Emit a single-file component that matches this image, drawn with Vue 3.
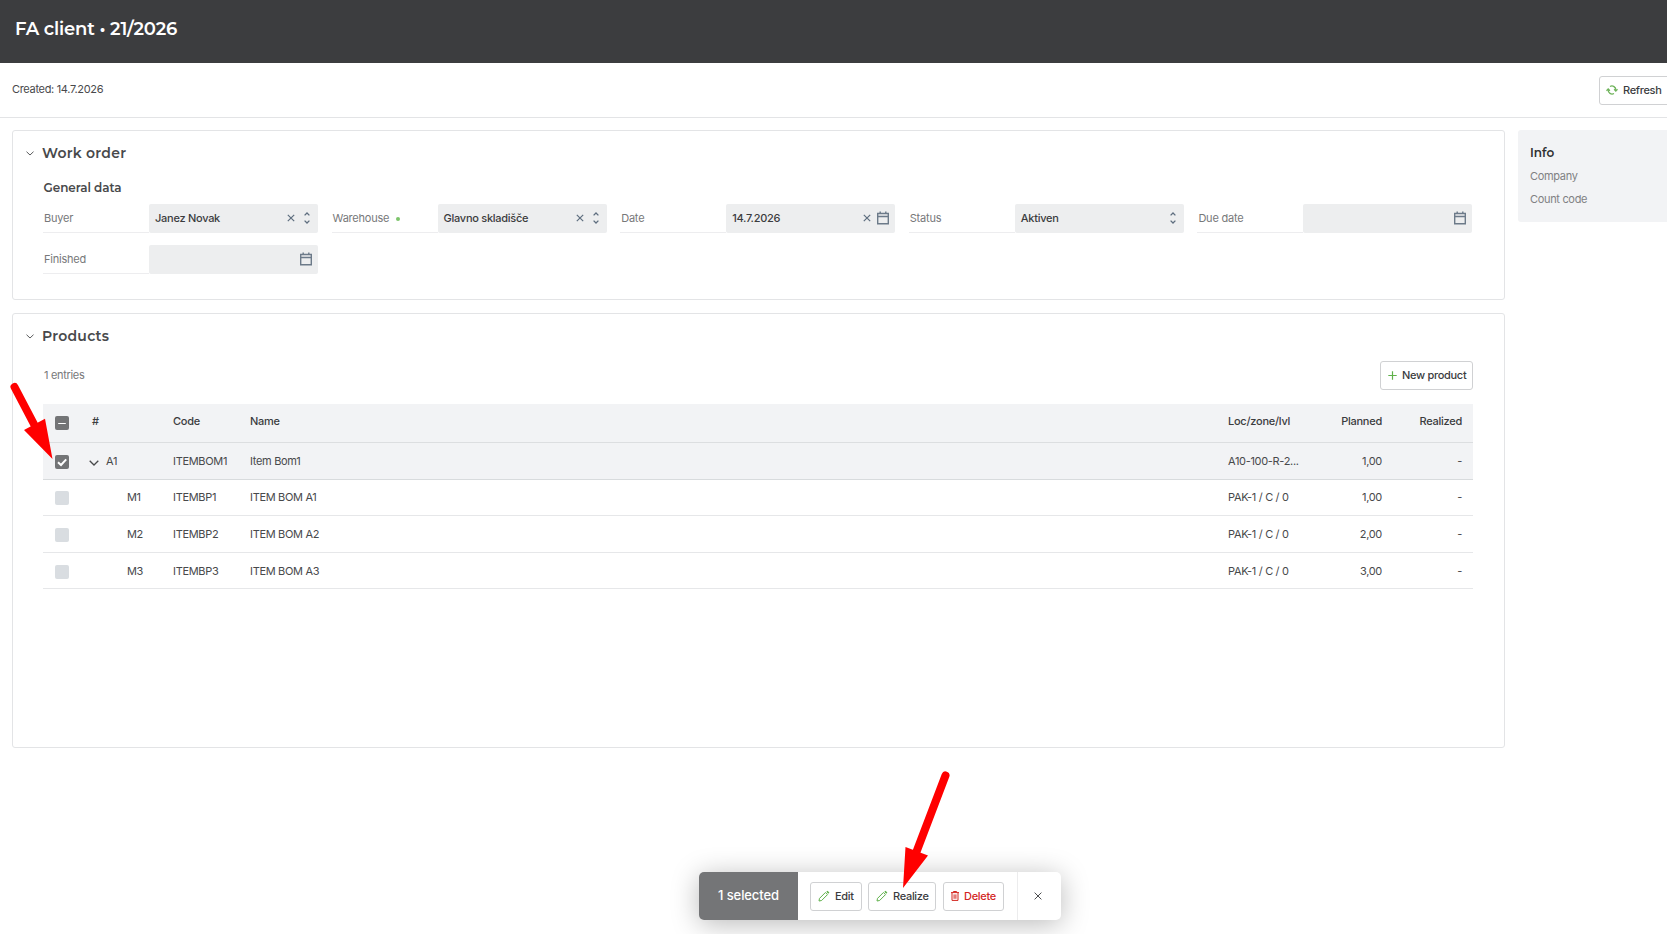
<script setup>
import { ref } from 'vue'

const fields = ref([
  { key: 'buyer', label: 'Buyer', value: 'Janez Novak', type: 'select', clearable: true },
  { key: 'warehouse', label: 'Warehouse', value: 'Glavno skladišče', type: 'select', clearable: true, required: true },
  { key: 'date', label: 'Date', value: '14.7.2026', type: 'date', clearable: true },
  { key: 'status', label: 'Status', value: 'Aktiven', type: 'select' },
  { key: 'due', label: 'Due date', value: '', type: 'date' },
  { key: 'finished', label: 'Finished', value: '', type: 'date' }
])

const rows = ref([
  { id: 'A1', code: 'ITEMBOM1', name: 'Item Bom1', loc: 'A10-100-R-2...', planned: '1,00', realized: '-', parent: true, checked: true },
  { id: 'M1', code: 'ITEMBP1', name: 'ITEM BOM A1', loc: 'PAK-1 / C / 0', planned: '1,00', realized: '-' },
  { id: 'M2', code: 'ITEMBP2', name: 'ITEM BOM A2', loc: 'PAK-1 / C / 0', planned: '2,00', realized: '-' },
  { id: 'M3', code: 'ITEMBP3', name: 'ITEM BOM A3', loc: 'PAK-1 / C / 0', planned: '3,00', realized: '-' }
])
</script>

<template>
  <div class="page">
    <header class="title-bar">
      <h1>FA client • 21/2026</h1>
    </header>

    <div class="sub-bar">
      <span class="created">Created: 14.7.2026</span>
      <button class="btn btn-refresh">
        <svg class="refresh" viewBox="0 0 12 10">
          <path d="M4 1.5A3.9 3.9 0 0 1 9.8 5.2M8 8.5A3.9 3.9 0 0 1 2.2 4.8" />
          <path d="M8.1 4.3L9.8 6L11.5 4.3M.5 5.7L2.2 4L3.9 5.7" />
        </svg>
        <span>Refresh</span>
      </button>
    </div>

    <div class="content">
      <main class="main">
        <!-- Work order -->
        <section class="panel order">
          <div class="panel-head">
            <svg class="chevron" viewBox="0 0 8 5"><path d="M.5 .7L4 4L7.5 .7" /></svg>
            <h2>Work order</h2>
          </div>
          <h3 class="group-title">General data</h3>
          <div class="form">
            <div v-for="f in fields" :key="f.key" class="field">
              <label>{{ f.label }}<i v-if="f.required" class="dot"></i></label>
              <div class="input">
                <span class="value">{{ f.value }}</span>
                <svg v-if="f.clearable" class="clear" viewBox="0 0 8 8"><path d="M.8 .8L7.2 7.2M7.2 .8L.8 7.2" /></svg>
                <svg v-if="f.type === 'select'" class="updown" viewBox="0 0 6 12">
                  <path d="M.6 3.4L3 1L5.4 3.4M.6 8.6L3 11L5.4 8.6" />
                </svg>
                <svg v-else class="calendar" viewBox="0 0 12 14">
                  <path d="M.7 2.5H11.3V12.7H.7ZM.7 5.5H11.3M3.2 .4V2.5M8.8 .4V2.5" />
                </svg>
              </div>
            </div>
          </div>
        </section>

        <!-- Products -->
        <section class="panel products">
          <div class="panel-head">
            <svg class="chevron" viewBox="0 0 8 5"><path d="M.5 .7L4 4L7.5 .7" /></svg>
            <h2>Products</h2>
          </div>
          <div class="toolbar">
            <span class="entries">1 entries</span>
            <button class="btn btn-new">
              <svg class="plus" viewBox="0 0 9 9"><path d="M4.5 .3V8.7M.3 4.5H8.7" /></svg>
              <span>New product</span>
            </button>
          </div>
          <div class="table">
            <div class="row head">
              <span class="check on">
                <svg viewBox="0 0 14 14"><path d="M3.2 7.5H10.8" stroke-width="1" /></svg>
              </span>
              <span class="num">#</span>
              <span>Code</span>
              <span>Name</span>
              <span>Loc/zone/lvl</span>
              <span class="right">Planned</span>
              <span class="right">Realized</span>
            </div>
            <div v-for="r in rows" :key="r.id" class="row" :class="{ selected: r.checked }">
              <span class="check" :class="{ on: r.checked }">
                <svg v-if="r.checked" viewBox="0 0 14 14"><path d="M3 7.3L6 10L11.2 4.4" stroke-width="2" /></svg>
              </span>
              <span class="num" :class="{ child: !r.parent }">
                <svg v-if="r.parent" class="expand" viewBox="0 0 10 6"><path d="M.7 .8L5 5L9.3 .8" /></svg>
                {{ r.id }}
              </span>
              <span>{{ r.code }}</span>
              <span>{{ r.name }}</span>
              <span>{{ r.loc }}</span>
              <span class="right">{{ r.planned }}</span>
              <span class="right">{{ r.realized }}</span>
            </div>
          </div>
        </section>
      </main>

      <aside class="info">
        <h4>Info</h4>
        <p>Company</p>
        <p>Count code</p>
      </aside>
    </div>

    <!-- Selection actions -->
    <div class="selection">
      <div class="count">1 selected</div>
      <div class="actions">
        <button class="btn btn-edit">
          <svg class="pencil" viewBox="0 0 12 12">
            <path d="M1 11L1.5 8.4L7.4 2.5L9.5 4.6L3.6 10.5Z" />
            <path class="eraser" d="M8.9 1.2L10.8 3.1" />
          </svg>
          <span>Edit</span>
        </button>
        <button class="btn btn-realize">
          <svg class="pencil" viewBox="0 0 12 12">
            <path d="M1 11L1.5 8.4L7.4 2.5L9.5 4.6L3.6 10.5Z" />
            <path class="eraser" d="M8.9 1.2L10.8 3.1" />
          </svg>
          <span>Realize</span>
        </button>
        <button class="btn btn-delete">
          <svg class="trash" viewBox="0 0 8 10">
            <path d="M0 1.6H8M2.4 1.4V.5H5.6V1.4M1 1.8V9.4H7V1.8M3.1 3.4V7.8M4.9 3.4V7.8" />
          </svg>
          <span>Delete</span>
        </button>
      </div>
      <button class="dismiss">
        <svg viewBox="0 0 8 8"><path d="M.6 .6L7.4 7.4M7.4 .6L.6 7.4" /></svg>
      </button>
    </div>

    <!-- Pointer arrows -->
    <svg class="arrows" viewBox="0 0 1667 934">
      <path class="shaft" d="M14.5 387L36 428M945.5 775.5L916 853" />
      <path class="tip" d="M24 430L45 418.7L52.5 459ZM905.5 847L928 855.5L903 888Z" />
    </svg>
  </div>
</template>

<style>
body {
  margin: 0;
  overflow: hidden;
}
</style>

<style scoped>
.page {
  position: relative;
  width: 1667px;
  height: 934px;
  overflow: hidden;
  background: #fff;
  color: #48494b;
  font-family: Inter, 'Liberation Sans', sans-serif;
  font-size: 11px;
  line-height: 14px;
  letter-spacing: -0.32px;
}

.page * {
  box-sizing: border-box;
}

h1, h2, h3, h4, p {
  margin: 0;
}

h1, h2, h3, h4 {
  font-family: Montserrat, Inter, sans-serif;
}

svg {
  display: block;
  flex: none;
  fill: none;
  stroke: currentColor;
}

/* Top bars */
.title-bar {
  height: 63px;
  padding: 17px 15px;
  background: #3c3d3f;
}

h1 {
  color: #fff;
  font-size: 18px;
  font-weight: 600;
  line-height: 24px;
  letter-spacing: -0.18px;
}

.sub-bar {
  display: flex;
  justify-content: space-between;
  height: 55px;
  padding: 13px 0 0 12px;
  border-bottom: 1px solid #e3e4e6;
}

.created {
  padding-top: 6px;
}

.btn {
  display: flex;
  align-items: center;
  height: 29px;
  padding: 0 0 1px;
  background: #fff;
  border: 1px solid #d0d1d3;
  border-radius: 3px;
  color: #3b3c3e;
  font-family: inherit;
  font-size: 11px;
  font-weight: 450;
  letter-spacing: -0.3px;
  white-space: nowrap;
}

.btn-refresh {
  width: 76px;
  margin-right: -8px;
  padding-left: 6px;
  gap: 5px;
}

.refresh {
  width: 12px;
  height: 10px;
  color: #6fb35b;
  stroke-width: 1.3;
}

/* Layout */
.content {
  display: flex;
  gap: 13px;
  padding: 12px 0 0 12px;
}

.main {
  display: flex;
  flex-direction: column;
  gap: 13px;
  width: 1493px;
}

.panel {
  border: 1px solid #e3e4e6;
  border-radius: 3px;
  padding-right: 31px;
}

.order {
  height: 170px;
}

.products {
  height: 435px;
}

.panel-head {
  display: flex;
  align-items: center;
  gap: 8px;
  height: 24px;
  margin: 10px 0 0 13px;
}

.chevron {
  width: 8px;
  height: 5px;
  stroke-width: 0.9;
}

h2 {
  font-size: 14px;
  font-weight: 600;
  letter-spacing: 0.25px;
}

.group-title {
  margin: 15px 0 9px 30.5px;
  font-size: 12px;
  font-weight: 600;
  line-height: 15px;
  letter-spacing: -0.05px;
}

/* Form */
.form {
  display: grid;
  grid-template-columns: repeat(5, 275px);
  column-gap: 13.6px;
  row-gap: 12px;
  padding-left: 30px;
}

.field {
  display: flex;
  height: 29px;
}

label {
  display: flex;
  align-items: center;
  width: 106px;
  padding-left: 1px;
  border-bottom: 1px solid #ededef;
  color: #77787a;
  letter-spacing: -0.22px;
}

.dot {
  width: 4px;
  height: 4px;
  margin: 1px 0 0 7px;
  border-radius: 50%;
  background: #7cc46b;
}

.input {
  display: flex;
  align-items: center;
  width: 169px;
  padding: 0 6px 1px;
  background: #edeeef;
  border-radius: 2px;
  color: #3b3c3e;
  font-weight: 450;
  letter-spacing: -0.27px;
}

.value {
  flex: 1;
}

.clear {
  width: 8px;
  height: 8px;
  color: #5e6e7f;
  stroke-width: 1.2;
}

.updown {
  width: 6px;
  height: 12px;
  margin: 0 2px 0 9px;
  color: #5e6e7f;
  stroke-width: 1.3;
}

.calendar {
  width: 12px;
  height: 14px;
  margin-left: 6px;
  color: #6c7a89;
  stroke-width: 1.4;
}

/* Products table */
.toolbar {
  display: flex;
  justify-content: space-between;
  margin-top: 13px;
  padding-left: 31px;
}

.entries {
  padding-top: 7px;
  color: #77787a;
}

.btn-new {
  width: 93px;
  padding-left: 7px;
  gap: 5px;
}

.plus {
  width: 9px;
  height: 9px;
  color: #5fb14a;
  stroke-width: 1.2;
}

.table {
  margin: 14px 0 0 30px;
}

.row {
  display: grid;
  grid-template-columns: 49px 81px 77px 978px 93px 61px 80px;
  align-items: center;
  height: 36.6px;
  border-bottom: 1px solid #e6e7e9;
}

.row.head {
  height: 39px;
  padding-bottom: 4px;
  background: #f2f3f5;
  border-color: #dcdee0;
  color: #3b3c3e;
  font-weight: 450;
  letter-spacing: -0.25px;
}

.row.selected {
  background: #f2f3f5;
  border-color: #d8dbdd;
}

.check {
  width: 14px;
  height: 14px;
  margin: 2px 0 0 12px;
  border-radius: 2px;
  background: #d9dde1;
}

.check.on {
  background: #737476;
  color: #fff;
}

.head .check {
  margin-top: 3px;
}

.num {
  display: flex;
  align-items: center;
}

.num.child {
  padding-left: 35px;
}

.expand {
  width: 10px;
  height: 6px;
  margin: 4px 7px 0 -3px;
  stroke-width: 1.3;
}

.right {
  text-align: right;
}

/* Info box */
.info {
  flex: 1;
  height: 92px;
  padding: 16px 12px;
  background: #f2f3f5;
  border-radius: 3px 0 0 3px;
  color: #808183;
}

h4 {
  margin-bottom: 9px;
  color: #2f3032;
  font-size: 12px;
  font-weight: 600;
  letter-spacing: 0;
}

.info p {
  margin-bottom: 9px;
}

/* Selection bar */
.selection {
  position: absolute;
  left: 699px;
  top: 872px;
  display: flex;
  width: 362px;
  height: 48px;
  border-radius: 5px;
  background: #fff;
  box-shadow: 0 4px 28px rgba(0, 0, 0, 0.28);
}

.count {
  width: 99px;
  border-radius: 5px 0 0 5px;
  background: #747577;
  color: #fff;
  font-size: 13px;
  font-weight: 450;
  letter-spacing: -0.1px;
  line-height: 47px;
  text-align: center;
}

.actions {
  display: flex;
  align-items: center;
  gap: 6px;
  width: 220px;
  padding: 1px 0 0 12px;
  border-right: 1px solid #ececed;
}

.btn-edit {
  width: 52px;
  padding-left: 7px;
  gap: 5px;
}

.btn-realize {
  width: 68px;
  padding-left: 7px;
  gap: 5px;
}

.btn-delete {
  width: 61px;
  margin-left: 1px;
  padding-left: 7px;
  gap: 5px;
  color: #d3261f;
}

.pencil {
  width: 12px;
  height: 12px;
  color: #5fb14a;
}

.eraser {
  stroke-width: 1.6;
}

.trash {
  width: 8px;
  height: 10px;
}

.dismiss {
  display: flex;
  align-items: center;
  flex: 1;
  padding: 0 0 0 16px;
  background: none;
  border: none;
  color: #4c4d4f;
}

.dismiss svg {
  width: 8px;
  height: 8px;
}

/* Pointer arrows lie over everything */
.arrows {
  position: absolute;
  inset: 0;
  width: 1667px;
  height: 934px;
  pointer-events: none;
}

.shaft {
  stroke: #f00;
  stroke-width: 8;
  stroke-linecap: round;
}

.tip {
  fill: #f00;
  stroke: none;
}
</style>
